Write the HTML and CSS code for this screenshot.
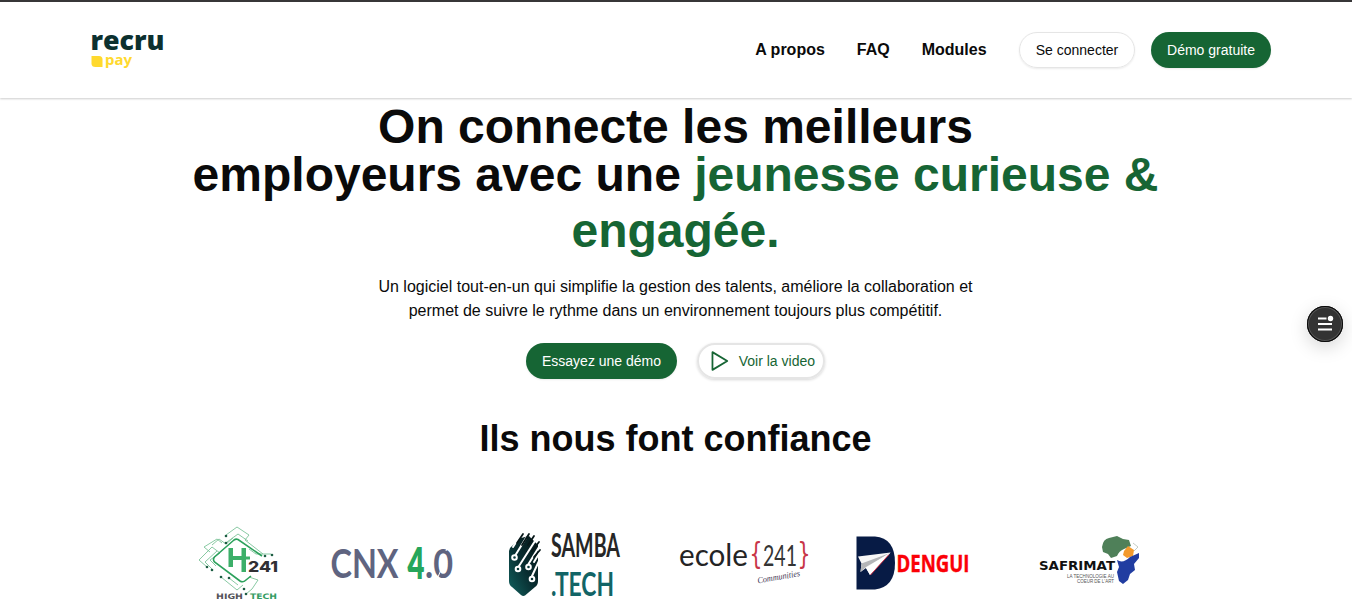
FILE: index.html
```html
<!DOCTYPE html>
<html lang="fr">
<head>
<meta charset="utf-8">
<title>Recru Pay</title>
<link rel="stylesheet" href="styles.css">
</head>
<body>
<header class="header">
  <svg class="brand" viewBox="88 28 80 44" width="80" height="44">
    <text x="90.500" y="49.500" class="brand-name" textLength="74" lengthAdjust="spacingAndGlyphs">recru</text>
    <path d="M91.500 56H99Q102.500 56 102.500 59.500V67H95.500Q91.500 67 91.500 63.500Z" fill="#ffd92e"/>
    <text x="105" y="64.500" class="brand-pay" textLength="27" lengthAdjust="spacingAndGlyphs">pay</text>
  </svg>
  <nav class="nav">
    <a>A propos</a><a>FAQ</a><a>Modules</a>
  </nav>
  <div class="actions">
    <a class="btn btn-outline">Se connecter</a>
    <a class="btn btn-primary">Démo gratuite</a>
  </div>
</header>
<main>
  <h1 class="title">
    <span class="line">On connecte les meilleurs</span>
    <span class="line">employeurs avec une <span class="accent">jeunesse curieuse &amp;</span></span>
    <span class="line line-last accent">engagée.</span>
  </h1>
  <p class="lead">Un logiciel tout-en-un qui simplifie la gestion des talents, améliore la collaboration et<br>permet de suivre le rythme dans un environnement toujours plus compétitif.</p>
  <div class="cta">
    <a class="btn btn-primary">Essayez une démo</a>
    <a class="btn btn-video"><svg width="20" height="22" viewBox="0 0 20 22"><path d="M2.500 2V20L17.500 11Z" fill="none" stroke="#166534" stroke-width="1.800" stroke-linejoin="round"/></svg>Voir la video</a>
  </div>
  <h2 class="subtitle">Ils nous font confiance</h2>
  <div class="partners">
    <svg viewBox="155 520 170 89">
      <g fill="none" stroke="#7cc399" stroke-width=".9">
        <path d="M226 535L237 527L249 535L245 540L263 554M227 542L238 534L248 541M212 545L219 539L226 544L233 538M210 552L204 547L217 539L222 543M207 567L199 560L212 547L220 553L210 560L216 566M212 569L205 562L217 551M221 577L237 590L243 585M249 577L258 580L252 589L246 594M229 578L238 585M249 549L256 554L271 554"/>
      </g>
      <path d="M262 556L238 539.500Q236 538.500 234 540L214.500 557Q212.500 559.500 214.500 562L240 581Q243 583 246 580L251 576" fill="none" stroke="#2ca15c" stroke-width="1.600"/>
      <g fill="#1d5d43"><circle cx="226" cy="536" r="1.300"/><circle cx="226" cy="543" r="1.300"/><circle cx="272" cy="555" r="1.300"/><circle cx="265" cy="556" r="1.300"/><circle cx="207" cy="567" r="1.300"/><circle cx="212" cy="570" r="1.300"/><circle cx="221" cy="577" r="1.300"/><circle cx="229" cy="578" r="1.300"/><circle cx="244" cy="589" r="1.300"/><circle cx="246" cy="594" r="1.300"/></g>
      <path d="M228.500 548H233V556H241.500V548H246V572H241.500V560H233V567H228.500Z" fill="#3caf69"/>
      <path d="M233 558H250" stroke="#3caf69" stroke-width="3"/>
      <text x="248" y="571.500" class="t-inter" textLength="30" lengthAdjust="spacingAndGlyphs">241</text>
      <text x="216" y="598.500" class="t-wide" font-size="7.500" fill="#55545a" textLength="27" lengthAdjust="spacingAndGlyphs">HIGH</text>
      <text x="250" y="598.500" class="t-wide" font-size="7.500" fill="#339c62" textLength="27" lengthAdjust="spacingAndGlyphs">TECH</text>
    </svg>
    <svg viewBox="325 520 170 89">
      <text x="330.500" y="578" class="t-cnx" fill="#5f6480" textLength="68" lengthAdjust="spacingAndGlyphs">CNX</text>
      <text x="407.500" y="578.500" class="t-cnx t-four" fill="#26a65b" textLength="17" lengthAdjust="spacingAndGlyphs">4</text>
      <text x="425" y="578" class="t-cnx" fill="#5f6480" textLength="28" lengthAdjust="spacingAndGlyphs">.0</text>
      <path d="M438 577L443 565M446 551L448 545" stroke="#fff" stroke-width="1"/>
    </svg>
    <svg viewBox="495 520 170 89">
      <defs><linearGradient id="samba" x1="0" y1="1" x2="1" y2="0"><stop offset="0" stop-color="#12625f"/><stop offset=".5" stop-color="#082d30"/><stop offset="1" stop-color="#071719"/></linearGradient></defs>
      <path d="M509 551Q509 548 512 546L521 538L529 536L538 545V581Q538 585 535 587L525 595.500Q523 596.500 521 595L512 587Q509 585 509 581Z" fill="url(#samba)"/>
      <g fill="none" stroke="#fff" stroke-width="2" stroke-linecap="round">
        <path d="M515.500 555L526 538M519 566L535 541M528.500 564L539 547M532 576L539 561M513 547L520 536M534 562L540 552"/>
        <g fill="#0a393a"><circle cx="514.500" cy="557.500" r="2.300"/><circle cx="518" cy="569" r="2.300"/><circle cx="528.500" cy="567" r="2.300"/><circle cx="532" cy="579" r="2.300"/></g>
      </g>
      <path d="M517 543L523 534M522 545L529 534M528 545L534 536M532 551L539 542M534 557L540 550" stroke="#071719" stroke-width="1.800" stroke-linecap="round"/>
      <text x="551" y="557" class="t-lato" font-size="33" fill="#262626" textLength="69" lengthAdjust="spacingAndGlyphs">SAMBA</text>
      <text x="551" y="595.500" class="t-lato" font-size="33" fill="#126466" textLength="63" lengthAdjust="spacingAndGlyphs">.TECH</text>
    </svg>
    <svg viewBox="665 520 170 89">
      <text x="679" y="565.500" class="t-ecole" textLength="69" lengthAdjust="spacingAndGlyphs">ecole</text>
      <text x="749.500" y="564" class="t-brace" textLength="13" lengthAdjust="spacingAndGlyphs">{</text>
      <text x="763" y="566" class="t-241" textLength="34" lengthAdjust="spacingAndGlyphs">241</text>
      <text x="797.500" y="564" class="t-brace" textLength="13" lengthAdjust="spacingAndGlyphs">}</text>
      <text x="758" y="583.500" class="t-script" textLength="43" lengthAdjust="spacingAndGlyphs" transform="rotate(-10 758 583.500)">Communities</text>
    </svg>
    <svg viewBox="835 520 170 89">
      <path d="M856.500 536.500H875Q895 538 895 563Q895 587 875 589.500H856.500Z" fill="#071b45"/>
      <path d="M890.500 552.500L858 556.500L861.500 563.500L860.500 572L866 568L870 575Z" fill="#f7f7f7"/><path d="M890 553L861.500 563.500L860.500 572L866 567Z" fill="#b4b5b8"/><path d="M866 568L890.500 552.500L870 575Z" fill="#fff"/><path d="M889 554.500L870.500 575" stroke="#df2e43" stroke-width=".9"/>
      <text x="896.500" y="571.500" class="t-dengui" fill="#fb0006" textLength="73" lengthAdjust="spacingAndGlyphs">DENGUI</text>
    </svg>
    <svg viewBox="1005 520 170 89">
      <path d="M1102 547Q1103 539 1109 538L1117 536L1123 539L1129 540L1131 546L1124 549Q1119 551 1117 556L1111 558L1108 554L1103 552Z" fill="#4f8059"/>
      <path d="M1124 551L1128 546L1134 550L1133 556L1127 558L1123 555Z" fill="#f39a2d"/>
      <path d="M1133 543L1138 547L1134 551" fill="none" stroke="#a9b5ab" stroke-width=".7"/>
      <path d="M1117 560Q1123 564 1130 557L1139 553V558L1134 564L1135 570L1130 574L1128 580L1123 584L1119 581L1117 572L1119 567Z" fill="#213da1"/>
      <text x="1039" y="570" class="t-wide" font-size="12" fill="#111" textLength="76" lengthAdjust="spacingAndGlyphs">SAFRIMAT</text>
      <text x="1067" y="577.500" class="t-small" textLength="47" lengthAdjust="spacingAndGlyphs">LA TECHNOLOGIE AU</text>
      <text x="1077" y="583" class="t-small" textLength="37" lengthAdjust="spacingAndGlyphs">COEUR DE L'ART</text>
    </svg>
  </div>
</main>
<button class="floating" aria-label="Menu"><svg width="36" height="36" viewBox="0 0 36 36"><path d="M11 12.500H19.500M11 18H25M11 23.500H25" stroke="#fff" stroke-width="1.800"/><circle cx="23.500" cy="12.500" r="2.700" fill="#fff"/></svg></button>
</body>
</html>
```
FILE: styles.css
```css
* { box-sizing: border-box; }
body { margin: 0; height: 609px; overflow: hidden; background: #fff; color: #0a0a0a; font-family: "Liberation Sans", Arial, sans-serif; }
.header { display: flex; align-items: center; height: 98px; border-top: 2px solid #373638; padding: 0 81px 0 88px; box-shadow: 0 1px 2px rgba(0,0,0,.2); }
.brand { display: block; overflow: visible; }
.brand-name { font: 800 27px "Open Sans", sans-serif; fill: #0c302f; }
.brand-pay { font: 700 14.5px "Noto Sans", sans-serif; fill: #ffd92e; }
.nav { display: flex; gap: 32px; margin-left: auto; font-size: 16px; font-weight: 700; line-height: 24px; }
.actions { display: flex; gap: 16px; margin-left: 32.4px; }
.btn { display: flex; align-items: center; justify-content: center; height: 36px; padding: 0 16px; border-radius: 18px; font-size: 14px; line-height: 20px; white-space: nowrap; box-shadow: 0 1px 2px rgba(0,0,0,.08); }
.btn-outline { border: 1px solid #e5e5e5; width: 116px; }
.btn-primary { background: #166534; color: #fff; }
.header .btn-primary { width: 120px; }
.btn-video { width: 128px; border: 2px solid #e5e5e5; color: #166534; padding: 0 8px 0 11px; gap: 9px; box-shadow: 0 1px 3px rgba(0,0,0,.16); }
main { width: 1351px; }
.title { margin: 5px 0 0; font-size: 48px; line-height: 48px; font-weight: 700; text-align: center; }
.line { display: block; }
.line-last { padding-top: 8px; }
.accent { color: #166534; }
.lead { margin: 20px 0 0; font-size: 16px; line-height: 24px; text-align: center; }
.cta { display: flex; justify-content: center; gap: 20px; margin-top: 20px; }
.cta .btn-primary { width: 151px; }
.subtitle { margin: 40px 0 0; font-size: 36px; line-height: 40px; text-align: center; }
.partners { display: flex; width: 1020px; margin: 61px 0 0 155px; }
.partners svg { display: block; width: 170px; height: 89px; flex: none; overflow: visible; }
.t-wide { font-family: "DejaVu Sans", sans-serif; font-weight: 700; }
.t-inter { font: 800 15px Inter, sans-serif; fill: #303034; }
.t-cnx { font: 700 41px Lato, sans-serif; }
.t-four { font-size: 44px; font-weight: 800; }
.t-lato { font-family: Lato, sans-serif; font-weight: 700; }
.t-ecole { font: 400 31px Lato, sans-serif; fill: #242424; }
.t-241 { font: 400 28px Lato, sans-serif; fill: #343434; }
.t-brace { font: 31px "DejaVu Sans", sans-serif; fill: #c83447; }
.t-script { font: italic 9px "Liberation Serif", serif; fill: #3b3353; }
.t-dengui { font: 700 23px "Open Sans", sans-serif; stroke: #fb0006; stroke-width: .4px; }
.t-small { font: 5.7px "Liberation Sans", sans-serif; fill: #555; }
.floating { position: absolute; right: 9px; top: 306px; width: 36px; height: 36px; padding: 0; border: 0; border-radius: 50%; background: #333; box-shadow: inset 0 0 0 1px #080808, inset 0 0 0 2px #555, 0 5px 18px rgba(0,0,0,.17); }
.floating svg { display: block; }
```
